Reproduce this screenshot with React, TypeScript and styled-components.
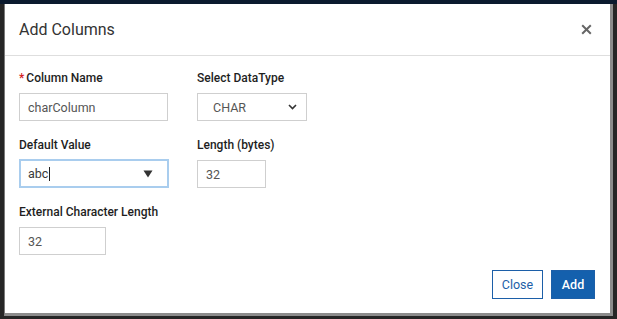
import React from 'react';
import styled, { createGlobalStyle } from 'styled-components';

const GlobalStyle = createGlobalStyle`
  html, body {
    margin: 0;
    padding: 0;
    background: #1c1c1c;
  }
  * {
    box-sizing: border-box;
  }
`;

const Backdrop = styled.div`
  width: 617px;
  height: 319px;
  padding: 4px 4px 3px 4px;
  background: linear-gradient(#0b1a2e 0, #0b1a2e 4px, #262626 4px);
  font-family: Roboto, 'Liberation Sans', Arial, sans-serif;
`;

const Dialog = styled.div`
  display: flex;
  flex-direction: column;
  height: 100%;
  background: #fff;
  border-left: 1px solid #7a7a7a;
  border-right: 3px solid #8c8c8c;
  border-bottom: 3px solid #8c8c8c;
`;

const Header = styled.div`
  display: flex;
  align-items: center;
  justify-content: space-between;
  height: 52px;
  padding: 0 17px 0 14px;
  border-bottom: 1px solid #dedede;
`;

const Title = styled.div`
  font-size: 16px;
  color: #333;
`;

const CloseIcon = styled.button`
  display: flex;
  align-items: center;
  justify-content: center;
  width: 14px;
  height: 14px;
  padding: 0;
  border: none;
  background: none;
`;

const Body = styled.div`
  flex: 1;
  display: grid;
  grid-template-columns: 178px auto;
  align-content: start;
  row-gap: 16px;
  padding: 14px 14px 0 14px;
`;

const Field = styled.div`
  display: flex;
  flex-direction: column;
  gap: 7px;
`;

const Label = styled.label`
  font-size: 12px;
  line-height: 16px;
  font-weight: 500;
  color: #1e1e1e;
`;

const Required = styled.span`
  color: #d42020;
  margin-right: 2px;
`;

const TextInput = styled.input<{ $width: number }>`
  width: ${(p) => p.$width}px;
  height: 28px;
  padding: 0 8px;
  border: 1px solid #cfcfcf;
  border-radius: 0;
  font-family: inherit;
  font-size: 12.5px;
  color: #555;
  outline: none;
`;

const SelectBox = styled.div<{ $width: number }>`
  display: flex;
  align-items: center;
  justify-content: space-between;
  width: ${(p) => p.$width}px;
  height: 28px;
  padding: 0 9px 0 15px;
  border: 1px solid #cfcfcf;
  font-size: 12.5px;
  color: #555;
`;

const ComboBox = styled.div<{ $width: number }>`
  display: flex;
  align-items: center;
  justify-content: space-between;
  width: ${(p) => p.$width}px;
  height: 29px;
  margin-top: -1px;
  padding: 0 14px 0 7px;
  border: 2px solid #a9cdee;
  font-size: 12.5px;
  color: #3a3a3a;
`;

const Caret = styled.span`
  display: inline-block;
  width: 1px;
  height: 14px;
  margin-left: 1px;
  vertical-align: -3px;
  background: #222;
`;

const Footer = styled.div`
  display: flex;
  justify-content: flex-end;
  gap: 8px;
  padding: 0 15px 14px 0;
`;

const Button = styled.button<{ $primary?: boolean; $width: number }>`
  width: ${(p) => p.$width}px;
  height: 29px;
  padding: 0;
  border: 1px solid #1c5fa8;
  background: ${(p) => (p.$primary ? '#1460ad' : '#fff')};
  color: ${(p) => (p.$primary ? '#fff' : '#1c5fa8')};
  font-family: inherit;
  font-size: 12.5px;
  font-weight: ${(p) => (p.$primary ? 500 : 400)};
`;

export default function App() {
  return (
    <>
      <GlobalStyle />
      <Backdrop>
        <Dialog>
          <Header>
            <Title>Add Columns</Title>
            <CloseIcon aria-label="Close">
              <svg width="11" height="11" viewBox="0 0 11 11">
                <path d="M1.2 1.2 L9.8 9.8 M9.8 1.2 L1.2 9.8" stroke="#666" strokeWidth="2" />
              </svg>
            </CloseIcon>
          </Header>
          <Body>
            <Field>
              <Label>
                <Required>*</Required>Column Name
              </Label>
              <TextInput $width={149} defaultValue="charColumn" />
            </Field>
            <Field>
              <Label>Select DataType</Label>
              <SelectBox $width={110}>
                CHAR
                <svg width="9" height="6" viewBox="0 0 9 6">
                  <path d="M1 1 L4.5 4.5 L8 1" fill="none" stroke="#333" strokeWidth="1.6" />
                </svg>
              </SelectBox>
            </Field>
            <Field>
              <Label>Default Value</Label>
              <ComboBox $width={150}>
                <span>
                  abc<Caret />
                </span>
                <svg width="10" height="8" viewBox="0 0 10 8">
                  <path d="M0.5 0.5 L9.5 0.5 L5 7.5 Z" fill="#333" />
                </svg>
              </ComboBox>
            </Field>
            <Field>
              <Label>Length (bytes)</Label>
              <TextInput $width={69} defaultValue="32" />
            </Field>
            <Field>
              <Label>External Character Length</Label>
              <TextInput $width={87} defaultValue="32" />
            </Field>
          </Body>
          <Footer>
            <Button $width={51}>Close</Button>
            <Button $primary $width={44}>Add</Button>
          </Footer>
        </Dialog>
      </Backdrop>
    </>
  );
}
